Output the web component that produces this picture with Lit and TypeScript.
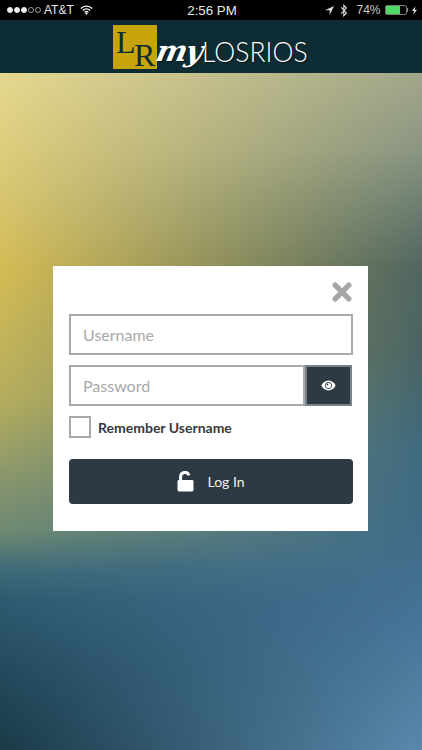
import {css, html, LitElement} from 'lit';
import {customElement} from 'lit/decorators.js';

@customElement('app-root')
class AppRoot extends LitElement {
  override render() {
    return html`
      <div class="status">
        <div class="status-left">
          <span class="dots">
            <i class="on"></i><i class="on"></i><i class="on"></i><i></i><i></i>
          </span>
          <span class="carrier">AT&amp;T</span>
          <svg class="wifi" viewBox="0 0 16 12" width="13" height="10">
            <path
              d="M1 4.2a10 10 0 0 1 14 0M3.4 6.6a6.6 6.6 0 0 1 9.2 0M5.7 8.9a3.3 3.3 0 0 1 4.6 0"
              fill="none"
              stroke="#fff"
              stroke-width="1.6"
            />
            <path d="M8 12 6.4 10.3a2.3 2.3 0 0 1 3.2 0z" fill="#fff" />
          </svg>
        </div>
        <div class="time">2:56 PM</div>
        <div class="status-right">
          <svg viewBox="0 0 10 10" width="9" height="9">
            <path d="M10 0 0 4.6h5.2V10z" fill="#ddd" />
          </svg>
          <svg class="bt" viewBox="0 0 8 14" width="8" height="13">
            <path
              d="M1 3.6 6.6 9.6 3.8 12.6V1.4L6.6 4.4 1 10.4"
              fill="none"
              stroke="#ddd"
              stroke-width="1.2"
            />
          </svg>
          <span class="pct">74%</span>
          <span class="battery"><span class="level"></span></span>
          <span class="nub"></span>
          <svg viewBox="0 0 6 10" width="5" height="9">
            <path d="M4 0 0 5.6h2.4L1.6 10 6 4H3.4z" fill="#ddd" />
          </svg>
        </div>
      </div>
      <header>
        <div class="logo">
          <div class="mark"><span class="l">L</span><span class="r">R</span></div>
          <span class="my">my</span>
          <span class="name">LOSRIOS</span>
        </div>
      </header>
      <main>
        <form class="card">
          <div class="close-row">
            <svg viewBox="0 0 20 20" width="20" height="20">
              <path
                d="M3.2 3.2 16.8 16.8M16.8 3.2 3.2 16.8"
                stroke="#a6a6a6"
                stroke-width="5.4"
                stroke-linecap="round"
              />
            </svg>
          </div>
          <div class="field"><span>Username</span></div>
          <div class="pass-row">
            <div class="field"><span>Password</span></div>
            <div class="eye">
              <svg viewBox="0 0 16 12" width="15" height="11">
                <path
                  d="M8 .6C4.4.6 1.6 3 .2 6c1.4 3 4.2 5.4 7.8 5.4s6.4-2.4 7.8-5.4C14.4 3 11.6.6 8 .6z"
                  fill="#fff"
                />
                <circle cx="8" cy="6" r="3.7" fill="#2d3a43" />
                <circle cx="8" cy="6" r="2.9" fill="#fff" />
                <circle cx="6.8" cy="4.8" r="1" fill="#2d3a43" />
              </svg>
            </div>
          </div>
          <label class="remember">
            <span class="check"></span>
            <span>Remember Username</span>
          </label>
          <div class="login">
            <svg viewBox="0 0 17 21" width="17" height="21">
              <path
                d="M3.6 10V5.6a4.3 4.3 0 0 1 8.4-1.2"
                fill="none"
                stroke="#fff"
                stroke-width="3"
              />
              <rect x="0.5" y="9" width="16" height="11.5" rx="1.4" fill="#fff" />
            </svg>
            <span>Log In</span>
          </div>
        </form>
      </main>
    `;
  }

  static override styles = css`
    :host {
      display: flex;
      flex-direction: column;
      width: 422px;
      height: 750px;
      overflow: hidden;
      font-family: 'Lato', sans-serif;
      background: #000;
    }

    .status {
      height: 20px;
      flex: none;
      background: #000;
      color: #e8e8e8;
      display: grid;
      grid-template-columns: 1fr auto 1fr;
      align-items: center;
      padding: 0 5px 0 7px;
      font-family: 'Liberation Sans', sans-serif;
      font-size: 12px;
    }

    .status-left {
      display: flex;
      align-items: center;
    }

    .dots {
      display: flex;
      gap: 1px;
      margin-right: 3px;
    }

    .dots i {
      width: 6px;
      height: 6px;
      box-sizing: border-box;
      border-radius: 50%;
      border: 0.7px solid #999;
    }

    .dots i.on {
      background: #eee;
      border-color: #eee;
    }

    .wifi {
      margin-left: 6px;
    }

    .time {
      font-size: 13.3px;
    }

    .status-right {
      display: flex;
      align-items: center;
      justify-content: flex-end;
    }

    .bt {
      margin-left: 6px;
    }

    .pct {
      margin-left: 8px;
      color: #ccc;
    }

    .battery {
      width: 22px;
      height: 10px;
      box-sizing: border-box;
      margin-left: 4px;
      border: 1px solid #777;
      border-radius: 2px;
      display: block;
    }

    .level {
      display: block;
      width: 74%;
      height: 100%;
      background: #4cd964;
    }

    .nub {
      width: 1.5px;
      height: 4px;
      background: #888;
      margin-right: 4px;
    }

    header {
      height: 53px;
      flex: none;
      background: #0e2c33;
      display: flex;
      justify-content: center;
      align-items: center;
    }

    .logo {
      display: flex;
      align-items: flex-start;
      width: 194px;
      height: 44px;
      margin-right: 2px;
      color: #fff;
    }

    .mark {
      width: 44px;
      height: 44px;
      flex: none;
      background: #c8a40c;
      color: #0e2c33;
      font-family: 'Liberation Serif', serif;
      line-height: 1;
      position: relative;
    }

    .mark span {
      position: absolute;
      font-size: 32px;
    }

    .l {
      left: 3px;
      top: 1px;
    }

    .r {
      left: 21px;
      top: 14px;
    }

    .my {
      width: 45px;
      flex: none;
      font-family: 'DejaVu Serif', serif;
      font-style: italic;
      font-weight: 700;
      font-size: 29px;
      line-height: 30px;
      letter-spacing: -1.5px;
      margin-top: 11px;
      transform: skewX(-12deg);
      text-shadow: 1px 1px 1px rgba(0, 0, 0, 0.5);
    }

    .name {
      font-family: 'Lato', sans-serif;
      font-weight: 300;
      font-size: 26.5px;
      line-height: 34px;
      margin-top: 10px;
      text-shadow: 1px 1px 1px rgba(0, 0, 0, 0.5);
    }

    main {
      flex: 1;
      position: relative;
      display: flex;
      justify-content: center;
      align-items: flex-start;
      padding-top: 193px;
      background: linear-gradient(
        180deg,
        #e5d88f 0,
        #d8c66f 127px,
        #d4bc55 197px,
        #b5ae5e 327px,
        #7d9070 430px,
        #6f8a72 458px,
        #3f6b78 497px,
        #2f5b70 527px,
        #22485a 607px,
        #1b3a48 677px
      );
    }

    /* right-hand colours, faded in across the width */
    main::before {
      content: '';
      position: absolute;
      inset: 0;
      background: linear-gradient(
        180deg,
        #a1a68a 0,
        #8a9582 77px,
        #6f8073 127px,
        #4f6560 197px,
        #4a6464 277px,
        #3f6a7f 377px,
        #3f6b87 457px,
        #477398 547px,
        #4f7ea0 607px,
        #5a89ad 677px
      );
      -webkit-mask-image: linear-gradient(90deg, transparent 0, #000 100%);
      mask-image: linear-gradient(90deg, transparent 0, #000 100%);
    }

    .card {
      position: relative;
      width: 315px;
      height: 265px;
      margin-right: 1px;
      box-sizing: border-box;
      background: #fff;
      padding: 16px 15px 0 16px;
      display: flex;
      flex-direction: column;
    }

    .close-row {
      height: 21px;
      display: flex;
      justify-content: flex-end;
      padding-right: 1px;
      margin-bottom: 11px;
    }

    .field {
      height: 41px;
      box-sizing: border-box;
      border: 2.5px solid #aaa;
      display: flex;
      align-items: center;
      padding-left: 12px;
      font-size: 16px;
      color: #a8a8a8;
      flex: none;
    }

    .pass-row {
      display: flex;
      height: 41px;
      margin-top: 10px;
      margin-right: 1px;
    }

    .pass-row .field {
      flex: 1;
    }

    .eye {
      width: 47px;
      flex: none;
      box-sizing: border-box;
      background: #2d3a43;
      border: 2px solid #79818a;
      display: flex;
      align-items: center;
      justify-content: center;
    }

    .remember {
      display: flex;
      align-items: center;
      margin-top: 10px;
      height: 22px;
      gap: 7px;
      font-size: 14px;
      font-weight: 700;
      color: #333b40;
    }

    .check {
      width: 22px;
      height: 22px;
      box-sizing: border-box;
      border: 2.5px solid #aaa;
      background: #fff;
    }

    .login {
      margin-top: 21px;
      height: 45px;
      border-radius: 4px;
      background: #2d3a43;
      color: #eef0f1;
      font-size: 14px;
      display: flex;
      align-items: center;
      justify-content: center;
      gap: 13px;
    }
  `;
}

declare global {
  interface HTMLElementTagNameMap {
    'app-root': AppRoot;
  }
}
